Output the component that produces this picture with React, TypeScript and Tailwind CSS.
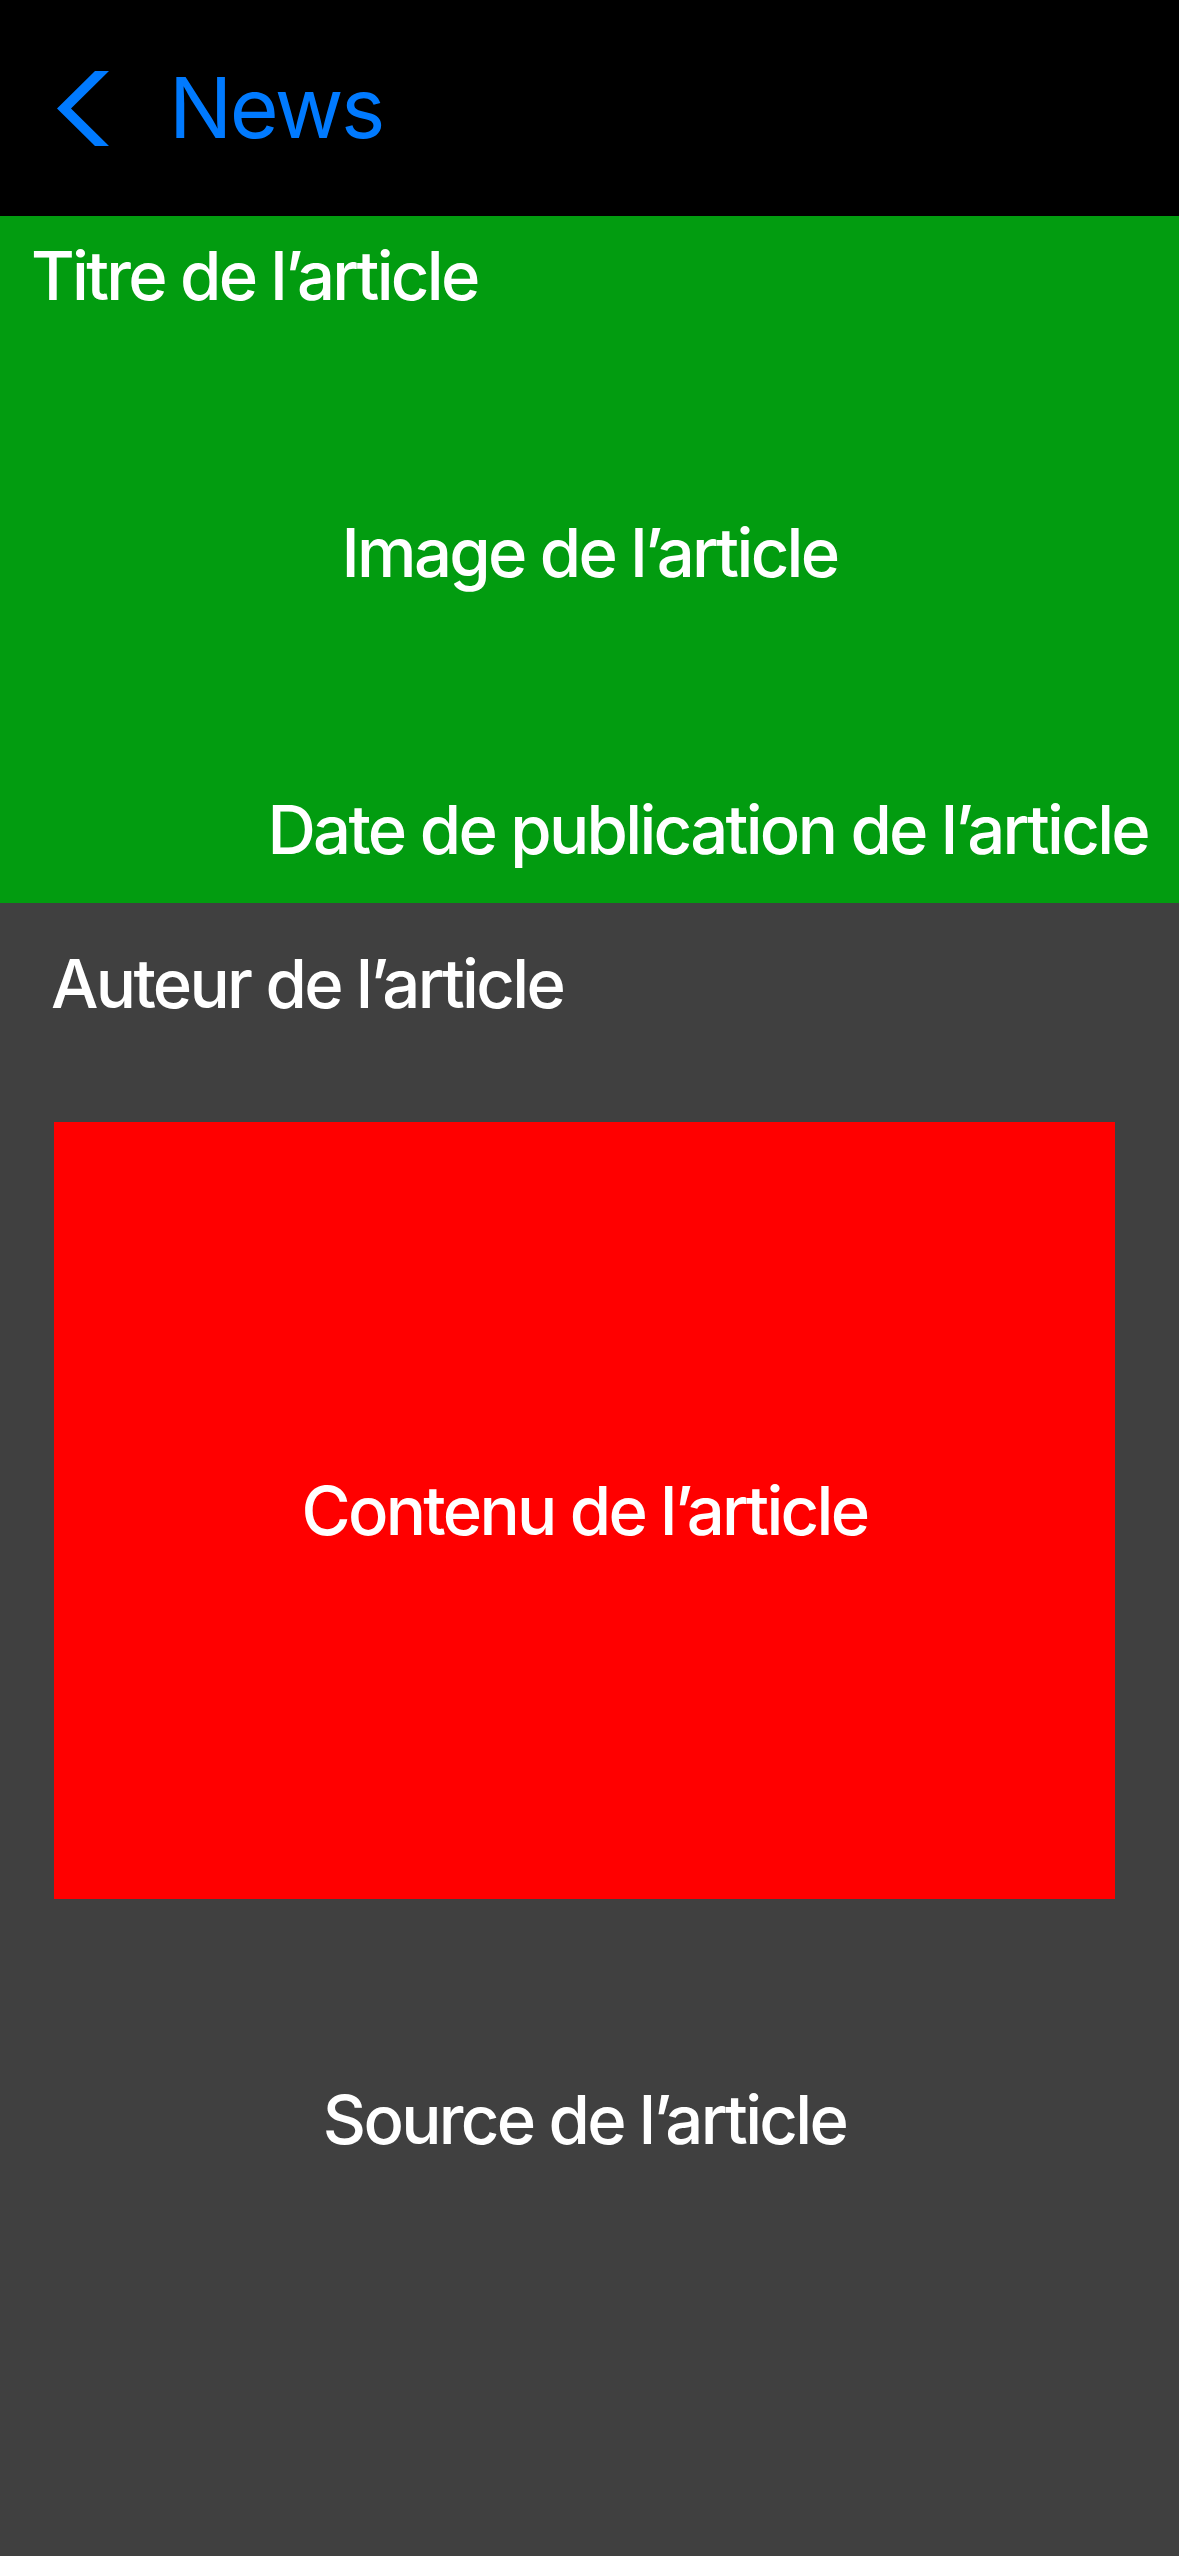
import { useState } from "react";

const font = { fontFamily: "Inter, 'Noto Sans', sans-serif" };

const Chevron = () => (
  <svg width="52" height="75" viewBox="0 0 52 75" className="shrink-0">
    <polygon points="38,0 52,0 14,37.5 52,75 38,75 0,37.5" fill="#007AFF" />
  </svg>
);

export default function App() {
  const [article] = useState({
    title: "Titre de l\u2019article",
    image: "Image de l\u2019article",
    date: "Date de publication de l\u2019article",
    author: "Auteur de l\u2019article",
    content: "Contenu de l\u2019article",
    source: "Source de l\u2019article",
  });

  const label = "text-[67px] leading-[67px] font-medium tracking-[-2.7px]";

  return (
    <div className="w-[1179px] min-h-[2556px] bg-[#404040] text-white" style={font}>
      {/* nav bar */}
      <header className="h-[216px] bg-black flex items-center pl-[57px]">
        <Chevron />
        <span className="ml-[60px] text-[84px] leading-none text-[#007AFF] tracking-[-2.5px]">News</span>
      </header>

      {/* header block */}
      <section className="h-[687px] bg-[#029C10] flex flex-col pt-[26px] pb-[40px]">
        <h1 className={`pl-[31px] ${label}`}>{article.title}</h1>
        <div className="flex-1 flex items-center justify-center">
          <span className={label}>{article.image}</span>
        </div>
        <p className={`self-end pr-[31px] ${label}`}>{article.date}</p>
      </section>

      {/* body */}
      <section className="pt-[47px] pb-[100px]">
        <p className={`pl-[51px] ${label}`}>{article.author}</p>
        <div className="ml-[54px] mt-[105px] w-[1061px] h-[777px] bg-[#FF0000] flex items-center justify-center">
          <span className={label}>{article.content}</span>
        </div>
        <div className="ml-[54px] w-[1061px] mt-[187px] flex justify-center">
          <span className={label}>{article.source}</span>
        </div>
      </section>
    </div>
  );
}
